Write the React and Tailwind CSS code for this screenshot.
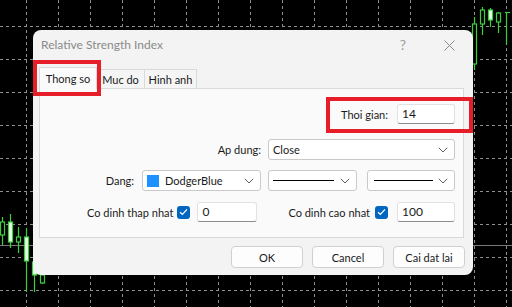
import React from "react";

const G = "#3ccf3c";

function Chart() {
  const vx = [];
  for (let k = 0; k < 16; k++) vx.push(26.5 + 32 * k);
  const hy = [];
  for (let k = 0; k < 9; k++) hy.push(26.5 + 33 * k);
  const candles = [
    { x: 0.5, w: 4, t: 222, b: 235, wt: 217, wb: 245, f: false },
    { x: 8.5, w: 4, t: 222, b: 242, wt: 214, wb: 248, f: true },
    { x: 16.5, w: 4, t: 237, b: 242, wt: 227, wb: 253, f: false },
    { x: 24.5, w: 4, t: 237, b: 261, wt: 228, wb: 292, f: true },
    { x: 32.5, w: 4, t: 262, b: 275, wt: 255, wb: 292, f: true },
    { x: 40.5, w: 4, t: 275, b: 283, wt: 262, wb: 284, f: false },
    { x: 472.5, w: 4, t: 24, b: 64, wt: 17, wb: 70, f: false },
    { x: 480.5, w: 4, t: 10, b: 24, wt: 7, wb: 35, f: false },
    { x: 488.5, w: 4, t: 10, b: 20, wt: 8, wb: 27, f: true },
    { x: 496.5, w: 4, t: 13, b: 22, wt: 12, wb: 33, f: false },
  ];
  return (
    <svg className="absolute inset-0" width="512" height="307" viewBox="0 0 512 307">
      {vx.map((x) => (
        <line key={"v" + x} x1={x} y1="0" x2={x} y2="307" stroke="#8f8f8f" strokeDasharray="3 3" />
      ))}
      {hy.map((y) => (
        <line key={"h" + y} x1="0" y1={y} x2="512" y2={y} stroke="#8f8f8f" strokeDasharray="3 3" />
      ))}
      <line x1="0" y1="245.5" x2="512" y2="245.5" stroke="#7a7a7a" />
      {candles.map((c, i) => (
        <g key={i}>
          <line x1={c.x + c.w / 2} y1={c.wt} x2={c.x + c.w / 2} y2={c.wb} stroke={G} strokeWidth="1.2" />
          <rect x={c.x} y={c.t} width={c.w} height={c.b - c.t} fill={c.f ? "#e6ffe6" : "#000"} stroke={G} strokeWidth="1.2" />
        </g>
      ))}
      <line x1="506.5" y1="12" x2="506.5" y2="45" stroke={G} strokeWidth="1.2" />
      <line x1="505" y1="12.5" x2="510" y2="12.5" stroke={G} strokeWidth="1.2" />
    </svg>
  );
}

function Chevron() {
  return (
    <svg width="10" height="6" viewBox="0 0 10 6" className="shrink-0">
      <path d="M0.8 0.8 L5 5 L9.2 0.8" fill="none" stroke="#5f5f5f" strokeWidth="1" />
    </svg>
  );
}

function Check() {
  return (
    <div className="w-[13px] h-[13px] rounded-[3px] bg-[#0067c0] flex items-center justify-center shrink-0">
      <svg width="9" height="8" viewBox="0 0 9 8">
        <path d="M1 4.2 L3.4 6.4 L8 1.4" fill="none" stroke="#fff" strokeWidth="1.3" />
      </svg>
    </div>
  );
}

function Input({ w, value }) {
  return (
    <div
      className={`h-[20px] bg-white border border-[#e2e2e2] border-b-[#8d8d8d] rounded-[3px] flex items-center pl-[4px] text-[12px] text-[#1a1a1a] shrink-0 ${w}`}
    >
      {value}
    </div>
  );
}

function Combo({ w, children }) {
  return (
    <div
      className={`h-[21px] bg-white border border-[#c9c9c9] rounded-[3px] flex items-center pl-[4px] pr-[6px] shrink-0 ${w}`}
    >
      <div className="flex-1 flex items-center min-w-0">{children}</div>
      <Chevron />
    </div>
  );
}

function Button({ children }) {
  return (
    <div className="w-[72px] h-[22px] rounded-[4px] border border-[#d0d0d0] bg-[#fdfdfd] flex items-center justify-center text-[#1a1a1a]">
      {children}
    </div>
  );
}

export default function App() {
  return (
    <div
      className="relative w-[512px] h-[307px] bg-black overflow-hidden text-[11px] leading-none"
      style={{ fontFamily: "Lato, 'Noto Sans', sans-serif" }}
    >
      <Chart />
      <div className="absolute left-[33px] top-[30px] w-[440px] h-[245px] rounded-[8px] bg-[#f3f3f3] flex flex-col">
        <div className="h-[30px] flex items-center pl-[8px] pr-[18px] text-[#8a8a8a]">
          <div className="flex-1 text-[12px]">Relative Strength Index</div>
          <div className="text-[14px] text-[#9a9a9a] mr-[38px]">?</div>
          <svg width="11" height="11" viewBox="0 0 11 11">
            <path d="M0.5 0.5 L10.5 10.5 M10.5 0.5 L0.5 10.5" stroke="#8a8a8a" strokeWidth="1" />
          </svg>
        </div>
        <div className="mt-[7px] ml-[6px] flex items-end h-[21px] text-[#1a1a1a]">
          <div className="relative z-10 w-[58px] h-[22px] mb-[-1px] bg-[#fafafa] border border-[#d9d9d9] border-b-0 flex items-center justify-center">
            Thong so
          </div>
          <div className="w-[48px] h-[19px] bg-[#f5f5f5] border border-[#d9d9d9] border-l-0 border-b-0 flex items-center justify-center">
            Muc do
          </div>
          <div className="w-[52px] h-[19px] bg-[#f5f5f5] border border-[#d9d9d9] border-l-0 border-b-0 flex items-center justify-center">
            Hinh anh
          </div>
        </div>
        <div className="ml-[6px] w-[425px] h-[150px] bg-[#fafafa] border border-[#d9d9d9] flex flex-col pt-[15px] pr-[8px] text-[#1a1a1a]">
          <div className="h-[20px] flex items-center justify-end gap-[9px]">
            <span>Thoi gian:</span>
            <Input w="w-[58px]" value="14" />
          </div>
          <div className="mt-[15px] h-[21px] flex items-center justify-end gap-[7px]">
            <span>Ap dung:</span>
            <Combo w="w-[187px]">Close</Combo>
          </div>
          <div className="mt-[10px] h-[21px] flex items-center justify-end">
            <span className="mr-[8px]">Dang:</span>
            <Combo w="w-[119px]">
              <div className="w-[12px] h-[12px] bg-[#1e90ff] mr-[6px] shrink-0" />
              <span>DodgerBlue</span>
            </Combo>
            <div className="w-[7px]" />
            <Combo w="w-[89px]">
              <div className="w-[61px] h-px bg-black" />
            </Combo>
            <div className="w-[10px]" />
            <Combo w="w-[88px]">
              <div className="w-[59px] h-px bg-black ml-[2px]" />
            </Combo>
          </div>
          <div className="mt-[11px] h-[20px] flex items-center justify-end">
            <span>Co dinh thap nhat</span>
            <div className="w-[4px]" />
            <Check />
            <div className="w-[7px]" />
            <Input w="w-[60px]" value="0" />
            <div className="w-[31px]" />
            <span>Co dinh cao nhat</span>
            <div className="w-[5px]" />
            <Check />
            <div className="w-[9px]" />
            <Input w="w-[58px]" value="100" />
          </div>
        </div>
        <div className="mt-[8px] flex justify-end gap-[9px] pr-[8px]">
          <Button>OK</Button>
          <Button>Cancel</Button>
          <Button>Cai dat lai</Button>
        </div>
      </div>
      <div className="absolute left-[33px] top-[60px] w-[68px] h-[36px] border-[4px] border-[#e61e2a]" />
      <div className="absolute left-[326px] top-[97px] w-[147px] h-[36px] border-[4px] border-[#e61e2a]" />
    </div>
  );
}
